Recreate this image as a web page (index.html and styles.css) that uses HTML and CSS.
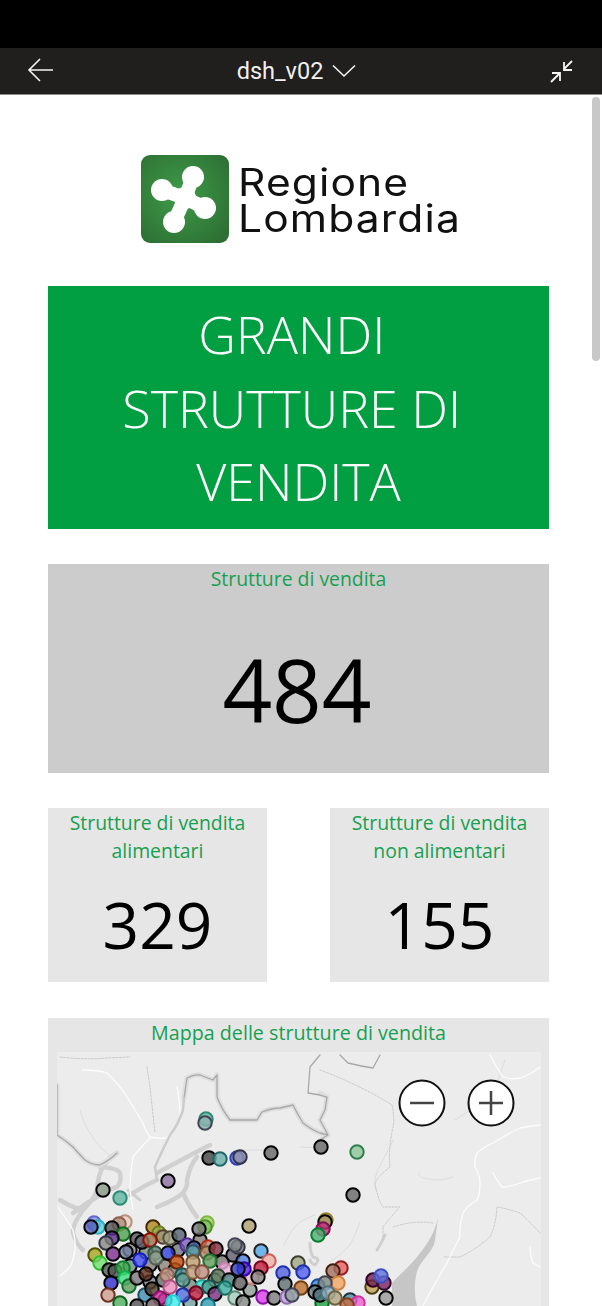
FILE: index.html
```html
<!DOCTYPE html>
<html>
<head>
  <title>dsh_v02</title>
  <link rel="stylesheet" href="styles.css">
</head>
<body>

  <div class="status-bar"></div>

  <header class="app-bar">
    <svg class="icon-back" width="28" height="24" viewBox="0 0 28 24">
      <path d="M13 1 L2 12 L13 23 M2 12 H26" />
    </svg>
    <div class="report-title">
      <span>dsh_v02</span>
      <svg width="24" height="14" viewBox="0 0 24 14"><path d="M1 1.500 L12 12 L23 1.500" /></svg>
    </div>
    <svg class="icon-shrink" width="26" height="26" viewBox="0 0 26 26">
      <path d="M23 3 L15 11 M15 4 V12 H23 M2 24 L10 16 M3 15 H11 V23" />
    </svg>
  </header>

  <main class="report">
    <div class="scroll-thumb"></div>

    <div class="logo">
      <svg class="logo-mark" width="88" height="88" viewBox="0 0 88 88">
        <defs>
          <radialGradient id="logoGreen" cx="45%" cy="45%" r="70%">
            <stop offset="0" stop-color="#3f9c49" />
            <stop offset="1" stop-color="#2c6e33" />
          </radialGradient>
        </defs>
        <rect width="88" height="88" rx="9" fill="url(#logoGreen)" />
        <path stroke="#fff" stroke-width="14" fill="none" d="M52 22 L44 43 M21 35 L44 43 M64 53 L44 43 M33 67 L44 43" />
        <g fill="#fff">
          <circle cx="52" cy="22" r="11" />
          <circle cx="21" cy="35" r="11" />
          <circle cx="64" cy="53" r="11" />
          <circle cx="33" cy="67" r="11" />
          <circle cx="44" cy="43" r="11" />
        </g>
      </svg>
      <div class="logo-text">
        <div>Regione</div>
        <div>Lombardia</div>
      </div>
    </div>

    <div class="banner">GRANDI 
STRUTTURE DI 
VENDITA</div>

    <section class="kpi kpi-main">
      <h3>Strutture di vendita</h3>
      <div class="kpi-value">484</div>
    </section>

    <div class="kpi-row">
      <section class="kpi kpi-small">
        <h3>Strutture di vendita<br>alimentari</h3>
        <div class="kpi-value">329</div>
      </section>
      <section class="kpi kpi-small">
        <h3>Strutture di vendita<br>non alimentari</h3>
        <div class="kpi-value">155</div>
      </section>
    </div>

    <section class="map-card">
      <h3>Mappa delle strutture di vendita</h3>
      <div class="map">
        <svg class="map-svg" width="484" height="254" viewBox="57 1052 484 254">
          <g class="land">
            <path class="lake-fill" d="M438 1218 C434 1236 424 1248 417 1257 C408 1268 398 1276 392 1283 L392 1306 L417 1306 C413 1292 415 1272 420 1265 C428 1254 434 1248 435 1240 Z" />
            <path class="lake" d="M60 1200 Q73 1208 83 1210 Q95 1198 97 1190 Q98 1175 103 1167 Q110 1156 117 1153 M83 1210 Q72 1225 73 1233 Q76 1244 83 1250 M100 1167 Q118 1168 120 1173 Q122 1182 117 1187 Q105 1190 97 1197 Q85 1204 73 1213" />
            <path class="lake" d="M157 1173 Q172 1165 187 1157 Q200 1150 210 1145 M157 1207 Q175 1200 183 1193 Q188 1186 187 1180 Q190 1165 197 1157 M183 1193 Q190 1208 197 1217 M130 1195 Q145 1185 157 1180" />
            <path class="lake-thin" d="M310 1243 Q310 1252 313 1257 Q318 1258 318 1260 Q316 1265 315 1265 Q311 1263 310 1260 M385 1235 Q381 1244 377 1250 M128 1190 L140 1200" />
            <path class="river" d="M420 1173 Q414 1178 437 1180 Q445 1180 453 1177 M284 1245 Q292 1228 300 1222 Q308 1217 315 1215 M360 1222 Q354 1238 350 1245 Q340 1256 330 1262 M393 1140 C385 1160 370 1175 376 1190 M505 1060 L495 1090 M455 1120 L470 1110 M80 1110 C85 1130 100 1150 110 1155 M240 1150 L270 1150 M300 1147 L320 1148" />
            <path class="trail" d="M392 1105 Q395 1120 393 1127 Q388 1150 390 1167 Q378 1176 375 1183 Q378 1200 383 1207 L400 1207 Q388 1220 383 1227 L383 1240 M393 1227 Q415 1220 433 1223 M540 1233 Q528 1220 520 1213 Q505 1208 497 1207 Q496 1225 490 1237 Q475 1250 460 1257 L443 1257 M147 1067 Q149 1080 150 1087 L155 1133 M60 1057 Q85 1060 107 1058 L130 1057 M320 1070 Q360 1085 392 1105" />
            <path class="road" d="M82 1070 Q100 1070 107 1073 Q120 1085 127 1097 Q135 1110 143 1123 Q146 1132 150 1137 Q160 1139 167 1138 Q176 1128 180 1117 Q180 1100 177 1087 M150 1138 Q138 1150 133 1157 Q130 1175 130 1190 L133 1210 M58 1207 Q68 1222 73 1230 Q76 1242 75 1250 Q73 1262 70 1267 L60 1276" />
            <path class="road" d="M490 1055 Q498 1070 503 1077 Q512 1080 520 1078 Q530 1075 540 1067 M540 1125 Q530 1126 520 1128 Q505 1135 493 1143 Q482 1148 477 1153 Q474 1160 475 1167 Q480 1175 480 1183 Q480 1195 477 1200 Q468 1205 463 1213 Q459 1225 460 1237 Q452 1252 447 1263 Q440 1275 433 1287 L423 1306 M493 1173 Q498 1182 502 1187 Q510 1187 520 1183 Q530 1180 540 1178 M530 1247 Q530 1256 533 1263 L540 1267" />
            <path class="border-glow" d="M57 1085 L57 1135 Q65 1140 73 1147 Q80 1155 85 1160 Q92 1165 100 1165 Q110 1160 117 1153 M184 1098 L187 1078 Q195 1074 200 1075 L213 1080 L217 1075 L217 1097 Q222 1110 230 1120 L257 1120 L262 1112 Q272 1108 280 1108 L293 1105 Q298 1115 303 1123 Q312 1130 320 1133 L328 1135 L320 1140 M320 1093 L327 1097 L325 1110 L320 1120 L328 1135" />
            <path class="border" d="M57 1085 L57 1135 Q65 1140 73 1147 Q80 1155 85 1160 Q92 1165 100 1165 Q110 1160 117 1153 M184 1098 L187 1078 Q195 1074 200 1075 L213 1080 L217 1075 L217 1097 Q222 1110 230 1120 L257 1120 L262 1112 Q272 1108 280 1108 L293 1105 Q298 1115 303 1123 Q312 1130 320 1133 L328 1135 L320 1140 M320 1055 L310 1067 L308 1093 L320 1095 L327 1097 L325 1110 L320 1120 L328 1135 M340 1055 L348 1063 Q360 1066 373 1068 L380 1055" />
            <path class="border-soft" d="M184 1098 L183 1110 Q178 1125 170 1135 Q160 1155 155 1167 L157 1180" />
          </g>
          <g id="points"></g>
          <g class="zoom-btn">
            <circle cx="422" cy="1103" r="22.500" />
            <path d="M410 1103 H434" />
            <circle cx="491" cy="1103" r="22.500" />
            <path d="M479 1103 H503 M491 1091 V1115" />
          </g>
        </svg>
      </div>
    </section>
  </main>

  <script>
    // x, y, fill and (for the pale ones) outline of every store on the map
    const stores = [
      [130,1250,'#8a8a90'],[146,1252,'#7a8a80'],[150,1265,'#8a8078'],[165,1266,'#90857a'],[178,1250,'#707a80'],[200,1240,'#888078'],[130,1266,'#70907a'],
      [150,1282,'#86808a'],[175,1270,'#7a9088'],[190,1285,'#8a8a80'],[215,1280,'#7a9080'],[222,1262,'#807878'],[250,1290,'#90a098'],[165,1300,'#90708a'],[190,1303,'#70a0a0'],
      [206,1119,'#5fb6a4','#2f8a78'],[205,1123,'#8fb0ad','#445'],[209,1158,'#444'],[220,1159,'#6bb0ac','#1f6a68'],[237,1158,'#6a7fe8','#3040c0'],[240,1157,'#8c90a8','#334'],
      [271,1153,'#666'],[321,1147,'#666'],[357,1152,'#8fc49c','#2f7f4c'],[353,1195,'#666'],[168,1181,'#8a70a0'],[103,1190,'#8a9a88'],[120,1198,'#5fb6a4','#2f8a78'],
      [94,1223,'#8890e8','#6068d0'],[98,1227,'#5ad8e0','#30b0c0'],[91,1227,'#5a5fb8'],[125,1222,'#e8d0c0','#b89078'],[119,1224,'#b09080','#906050'],[112,1228,'#555'],
      [123,1234,'#50a050','#107020'],[112,1238,'#603090'],[106,1243,'#888','#334'],
      [153,1227,'#b08820','#402800'],[159,1233,'#a0b050','#708020'],[163,1237,'#a09070','#504030'],[137,1239,'#555'],[142,1242,'#667'],[150,1240,'#a07050','#901000'],
      [170,1238,'#a0a080','#505040'],[179,1235,'#556070'],
      [207,1223,'#a0d860','#80b840'],[205,1227,'#80c060','#509030'],[199,1229,'#777'],[249,1226,'#b0a070'],
      [326,1220,'#c0b060','#988030'],[325,1222,'#a09060'],[323,1229,'#c03080','#801050'],[318,1235,'#50b070','#008030'],
      [95,1255,'#a8a820','#505000'],[100,1263,'#70e070','#30c030'],[113,1254,'#803090'],[126,1252,'#7080a0'],[140,1260,'#4050f0','#1020c0'],
      [155,1253,'#608070','#305040'],[156,1258,'#90a090','#506050'],[168,1253,'#3040e0'],[187,1245,'#8060c0','#503090'],[194,1248,'#5070c0'],[193,1252,'#60a0a0','#305060'],
      [177,1262,'#c05010','#702000'],[193,1262,'#c0a070','#705030'],[208,1247,'#d08060','#b03020'],[207,1253,'#b09070','#705030'],[216,1249,'#803040'],[210,1261,'#60a060','#207030'],
      [225,1270,'#f0b0e0','#d080b8'],[218,1276,'#608060','#304030'],[233,1255,'#606070'],[238,1247,'#808080','#334'],[235,1245,'#808888','#445'],
      [243,1261,'#5080e0'],[261,1251,'#50a8e8','#222'],[269,1261,'#f0b0a8','#d06060'],[252,1278,'#f0c0c0','#c08080'],[261,1268,'#c02040','#800020'],[244,1269,'#6020f0','#3000b0'],
      [258,1277,'#888'],[229,1280,'#508080'],[240,1283,'#606060'],[238,1269,'#3040c0'],
      [109,1270,'#506050'],[115,1271,'#555'],[123,1268,'#40b050','#108030'],[125,1278,'#40e080','#10b050'],[129,1286,'#60a060','#107030'],[111,1283,'#3030d0'],[108,1295,'#d0a090','#703020'],
      [137,1278,'#807880'],[146,1274,'#603020'],[163,1280,'#607070'],[167,1275,'#d0a090','#906050'],[182,1275,'#509090','#205050'],[183,1280,'#60a090','#205050'],[193,1272,'#c0a080','#806040'],[202,1272,'#c09080','#805040'],
      [170,1287,'#f090c0','#b05080'],[145,1295,'#4090b0','#205070'],[152,1289,'#504030'],[160,1298,'#d030a0','#901070'],[202,1287,'#40e0d0','#20b0a0'],[183,1295,'#5070e0','#2030a0'],[196,1293,'#c02040','#700020'],
      [209,1287,'#50a090','#205050'],[215,1294,'#803080'],[225,1288,'#40b0a0','#107060'],[235,1298,'#a0d0c0','#608070'],[243,1302,'#888'],
      [120,1303,'#50b060','#106020'],[137,1306,'#555'],[153,1305,'#706060'],[173,1302,'#40f0f0','#20d0d0'],[208,1305,'#30a0b0','#107080'],
      [298,1263,'#a0a880','#404030'],[283,1273,'#5060e0','#2030b0'],[303,1272,'#5060f0','#2030b0'],[285,1284,'#607070'],[301,1288,'#c07030','#704010'],
      [263,1297,'#e040f0','#9010b0'],[274,1298,'#808080'],[287,1297,'#c0a0e0','#9070b0'],[292,1295,'#90a0a0','#445'],
      [341,1268,'#f06060','#902020'],[333,1271,'#a07060','#402010'],[338,1283,'#f0a860','#d08040'],[318,1286,'#4090e0','#1050b0'],[325,1283,'#808880','#445'],[315,1292,'#708080'],[322,1303,'#20a040','#007020'],
      [320,1295,'#507080'],[328,1293,'#90b0c0','#507080'],[335,1298,'#b0a880','#706040'],[350,1300,'#5090a0','#203040'],[358,1303,'#f060d0','#d030a0'],[347,1305,'#c07040','#804020'],
      [372,1287,'#c0a050','#504010'],[373,1280,'#702050','#300020'],[384,1283,'#802060','#301030'],[381,1276,'#6070e0','#4050c0'],[386,1298,'#999']
    ];

    const points = document.getElementById('points');
    stores.forEach(function (s) {
      const c = document.createElementNS('http://www.w3.org/2000/svg', 'circle');
      c.setAttribute('cx', s[0]);
      c.setAttribute('cy', s[1]);
      c.setAttribute('r', 6.7);
      c.setAttribute('fill', s[2]);
      c.setAttribute('stroke', s[3] || '#050505');
      c.setAttribute('class', 'store');
      points.appendChild(c);
    });
  </script>

</body>
</html>
```

FILE: styles.css
```css
html, body {
  margin: 0;
  padding: 0;
  height: 1306px;
  overflow: hidden;
  background: white;
  font-family: 'Open Sans', 'Liberation Sans', sans-serif;
}

.status-bar {
  height: 48px;
  background: black;
}

.app-bar {
  height: 46px;
  background: #201f1e;
  border-bottom: 1px solid #8a8a8a;
  display: flex;
  align-items: center;
  justify-content: space-between;
  padding: 0 27px;
}

.app-bar svg path {
  fill: none;
  stroke: #f4f4f4;
  stroke-width: 1.6;
}

.app-bar .icon-shrink path {
  stroke-width: 1.800;
}

.icon-back {
  margin-top: -2px;
}

.report-title {
  display: flex;
  align-items: center;
  gap: 9px;
  margin-right: 11px;
  color: #f0f0f0;
  font-family: Roboto, sans-serif;
  font-size: 23.500px;
}

.report {
  position: relative;
  height: 1211px;
  padding: 0 53px 0 48px;
  overflow: hidden;
}

.scroll-thumb {
  position: absolute;
  top: 2px;
  right: 2px;
  width: 8px;
  height: 264px;
  border-radius: 4px;
  background: #c8c8c8;
}

.logo {
  display: flex;
  align-items: center;
  gap: 9px;
  height: 88px;
  margin: 60px 0 43px;
  padding-left: 93px;
}

.logo-text {
  padding-top: 2px;
  font-family: Inter, sans-serif;
  font-size: 38px;
  line-height: 36px;
  letter-spacing: 1px;
  color: #111;
  transform: scaleX(1.12);
  transform-origin: left center;
}

.banner {
  height: 243px;
  background: #019f41;
  color: white;
  font-weight: 300;
  font-size: 52px;
  line-height: 73.500px;
  text-align: center;
  white-space: pre;
  display: flex;
  align-items: center;
  justify-content: center;
}

.kpi {
  text-align: center;
}

.kpi h3, .map-card h3 {
  margin: 0;
  padding-top: 1px;
  color: #16a050;
  font-size: 19.400px;
  font-weight: 400;
  line-height: 28px;
}

.map-card h3 {
  font-size: 19.700px;
}

.kpi-main {
  height: 209px;
  margin-top: 35px;
  background: #cccccc;
}

.kpi-main .kpi-value {
  font-size: 87px;
  line-height: 116px;
  margin-top: 38px;
  padding-right: 3px;
}

.kpi-value {
  color: black;
}

.kpi-row {
  display: flex;
  justify-content: space-between;
  margin-top: 35px;
}

.kpi-small {
  width: 219px;
  height: 174px;
  background: #e6e6e6;
}

.kpi-small .kpi-value {
  font-size: 64px;
  line-height: 88px;
  margin-top: 16px;
}

.map-card {
  height: 288px;
  margin-top: 36px;
  background: #e6e6e6;
  text-align: center;
}

.map {
  height: 254px;
  margin: 5px 8px 0 9px;
  background: #ececec;
  overflow: hidden;
}

.map-svg {
  display: block;
}

.land {
  filter: blur(0.7px);
}

.land path {
  fill: none;
  stroke-linecap: round;
  stroke-linejoin: round;
}

.land .lake-fill {
  fill: #c6c6c6;
}

.lake {
  stroke: #d0d0d0;
  stroke-width: 4.500;
}

.lake-thin {
  stroke: #cfcfcf;
  stroke-width: 3;
}

.river {
  stroke: #dcdcdc;
  stroke-width: 1;
}

.trail {
  stroke: #c8c8c8;
  stroke-width: 1;
  stroke-dasharray: 2 1.500;
}

.road {
  stroke: #fcfcfc;
  stroke-width: 1.300;
}

.border-glow {
  stroke: #dedede;
  stroke-width: 5;
}

.border {
  stroke: #a8a8a8;
  stroke-width: 1.300;
}

.border-soft {
  stroke: #cccccc;
  stroke-width: 2.500;
}

.store {
  stroke-width: 2;
  fill-opacity: 0.8;
}

.zoom-btn circle {
  fill: white;
  stroke: #111;
  stroke-width: 2;
}

.zoom-btn path {
  fill: none;
  stroke: #444;
  stroke-width: 2.500;
}
```
